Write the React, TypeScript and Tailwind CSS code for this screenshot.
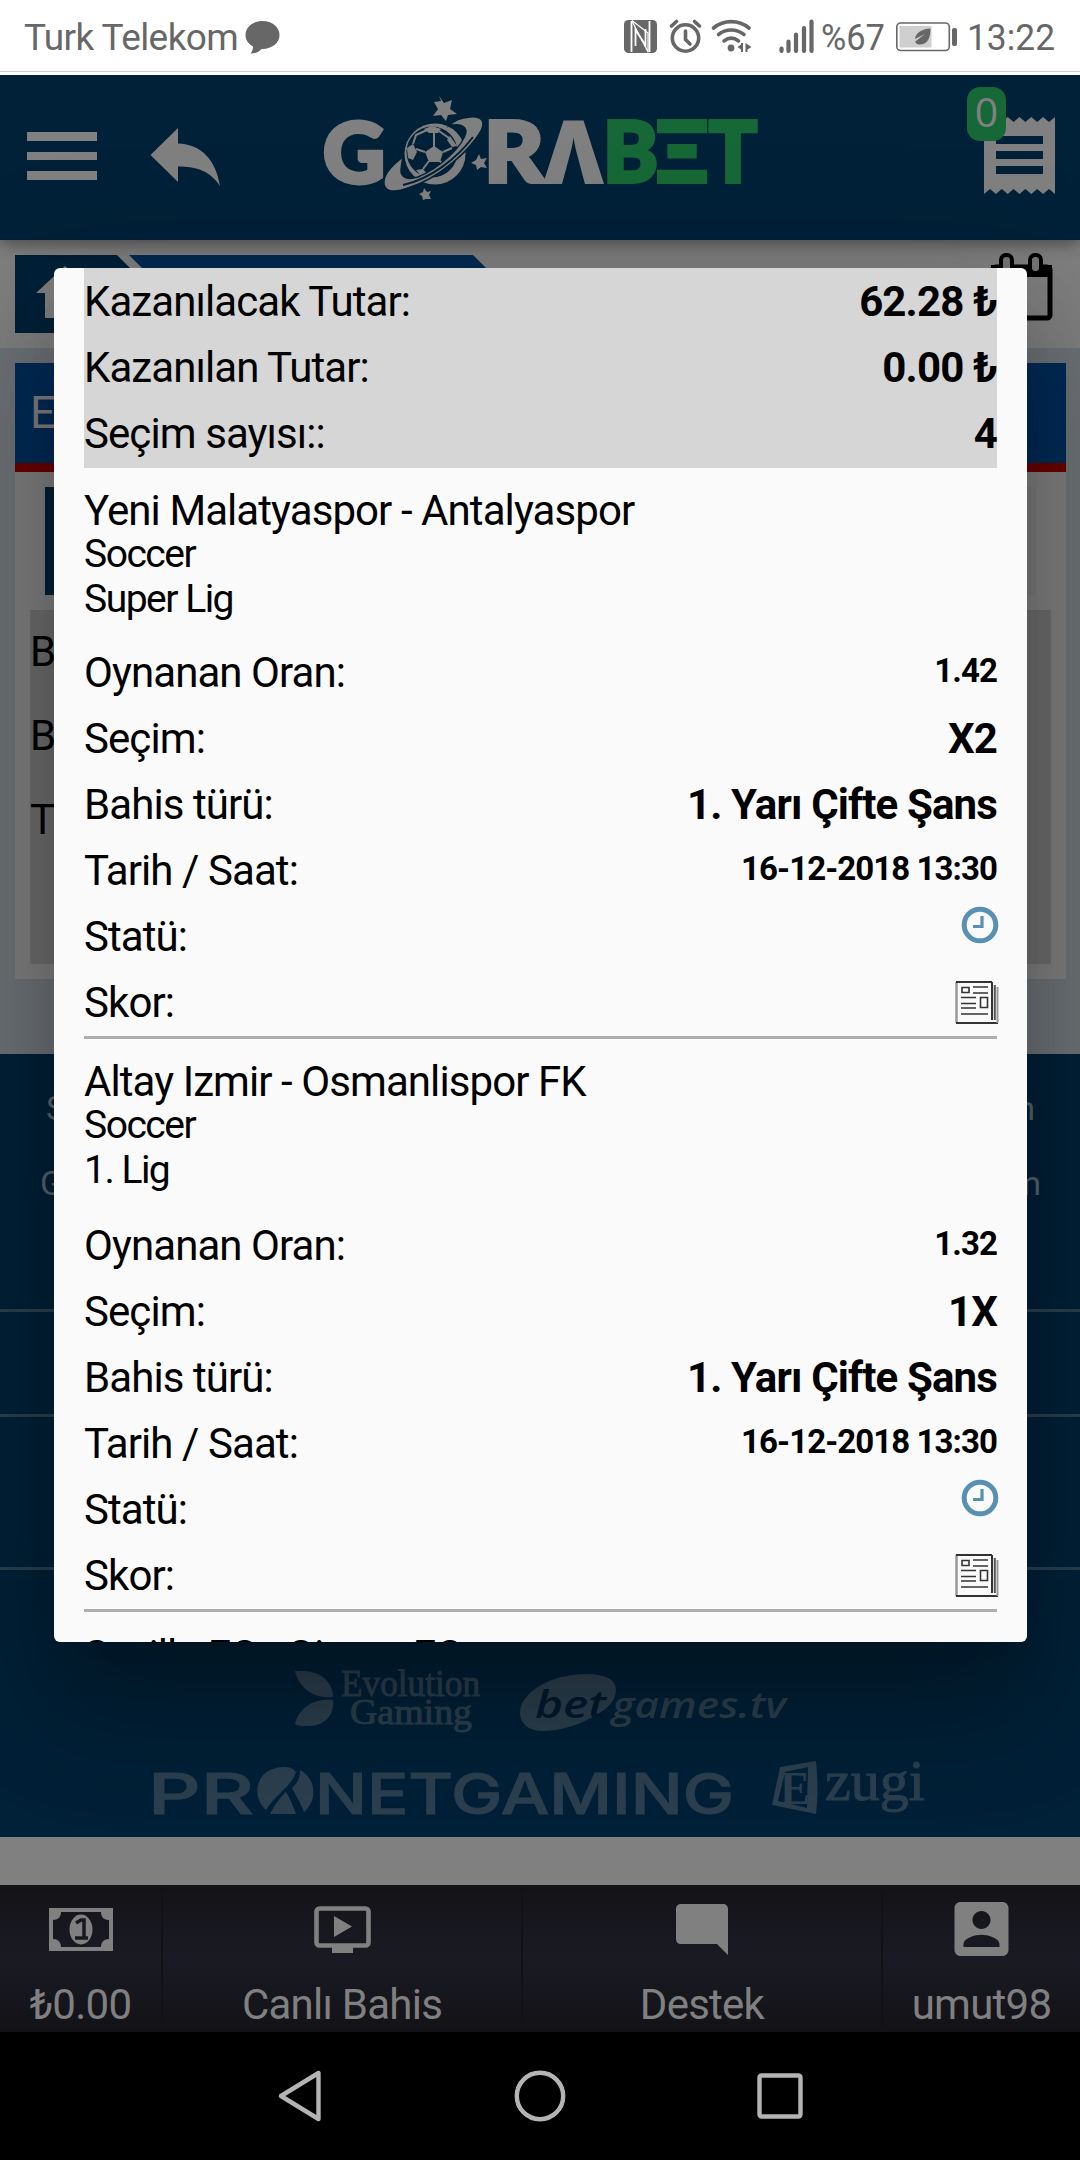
import type { ReactNode } from "react";

type Match = {
  teams: string;
  sport: string;
  league: string;
  odds: string;
  pick: string;
  market: string;
  date: string;
};

const matches: Match[] = [
  {
    teams: "Yeni Malatyaspor - Antalyaspor",
    sport: "Soccer",
    league: "Super Lig",
    odds: "1.42",
    pick: "X2",
    market: "1. Yarı Çifte Şans",
    date: "16-12-2018 13:30",
  },
  {
    teams: "Altay Izmir - Osmanlispor FK",
    sport: "Soccer",
    league: "1. Lig",
    odds: "1.32",
    pick: "1X",
    market: "1. Yarı Çifte Şans",
    date: "16-12-2018 13:30",
  },
];

export default function App() {
  return (
    <div className="flex h-[2160px] w-[1080px] flex-col overflow-hidden bg-black font-[Roboto,'Noto_Sans',sans-serif]">
      <StatusBar />
      <div className="relative flex h-[1957px] flex-col overflow-hidden">
        <Header />
        <Breadcrumb />
        <BetCard />
        <Footer />
        <div className="h-12 shrink-0 bg-[#808080]" />
        <BottomNav />
        <BetDialog />
      </div>
      <AndroidNav />
    </div>
  );
}

function StatusBar() {
  return (
    <div className="flex h-[75px] shrink-0 flex-col bg-white text-[#676767]">
      <div className="flex h-[71px] items-center justify-between pl-6 pr-6">
        <div className="flex items-center gap-[7px] pt-1">
          <span className="text-[37px] leading-none tracking-[-0.6px]">Turk Telekom</span>
          <svg width="35" height="33" viewBox="0 0 35 33" fill="currentColor">
            <path d="M17.5 0C8 0 .5 6.200.5 14c0 5 3 9 7.500 11.500C8 28 7.500 30 5.500 32.500c5 0 8.500-1.800 11-4.600h1C27 27.900 34.500 22 34.500 14S27 0 17.500 0z" />
          </svg>
        </div>
        <StatusIcons />
      </div>
      <div className="h-px bg-[#cccccc]" />
    </div>
  );
}

function StatusIcons() {
  return (
    <svg width="432" height="71" viewBox="624 0 432 71" fill="currentColor" stroke="none">
      {/* NFC */}
      <rect x="624" y="20" width="33" height="33" rx="4.500" />
      <path d="M631.500 21v31M649.500 21v31" stroke="#fff" strokeWidth="1.800" fill="none" />
      <path d="M632 20.500l16 12.500v19.500M648 52L632.500 22" stroke="#fff" strokeWidth="1.200" fill="none" />
      <path d="M635.500 46V30l10 15V29" stroke="#fff" strokeWidth="1.800" fill="none" />
      {/* alarm */}
      <g fill="none" stroke="currentColor" strokeWidth="3.600" strokeLinecap="round">
        <circle cx="685.500" cy="38" r="13.200" />
        <path d="M685.500 31v8.500l4.500 4.500M671.500 26l5-4.500M699.500 26l-5-4.500" />
      </g>
      {/* wifi */}
      <g fill="none" stroke="currentColor" strokeWidth="3.600" strokeLinecap="round">
        <path d="M713.500 28c10.500-8.500 25-8.500 35.500 0M718.500 34.500c7.500-6 17.500-6 25.500 0M724 41c4.500-3.500 10-3.500 14.500 0" />
      </g>
      <circle cx="731" cy="48" r="3.400" />
      <path d="M743 43v9h-2v-2.500l-3.500-2.500 3.500-2.500v-1.500zM745.500 43l6 4-4 2.500V52h-2z" />
      {/* signal */}
      <g stroke="currentColor" strokeWidth="4.200" strokeLinecap="round">
        <path d="M781.500 48.500v2.500M788.500 41.500v9.500M796 34.500v16.500M804 28v23M811.500 21.500v29.500" />
      </g>
      <text x="821" y="50" fontSize="37" textLength="64" lengthAdjust="spacingAndGlyphs">%67</text>
      {/* battery */}
      <rect x="896.800" y="23" width="52.500" height="27.500" rx="4" fill="none" stroke="currentColor" strokeWidth="1.600" />
      <rect x="899.500" y="26" width="32" height="21.500" fill="#cfcfcf" />
      <path d="M930.500 28.500c-9 .5-15 4.500-15.500 10.500l10-5-9.800 7.500c.5 2 1.800 3 4.300 3 7.500 0 11-5.500 11-16z" />
      <rect x="952" y="28" width="5" height="18" rx="2" />
      <text x="967" y="50" fontSize="37" textLength="88" lengthAdjust="spacingAndGlyphs">13:22</text>
    </svg>
  );
}

function Header() {
  return (
    <header className="relative z-10 flex h-[165px] shrink-0 items-start bg-[#002138] pl-[27px] pr-[25px] shadow-[0_4px_14px_rgba(0,0,0,0.4)]">
      <div className="flex gap-[53px]">
        <div className="mt-[57px] flex flex-col gap-[11px]">
          <div className="h-[9px] w-[70px] bg-[#808080]" />
          <div className="h-[8px] w-[70px] bg-[#808080]" />
          <div className="h-[9px] w-[70px] bg-[#808080]" />
        </div>
        <svg className="mt-[53px]" width="71" height="59" viewBox="0 0 71 59" fill="#808080">
          <path d="M28 0v15.500C51 16 66 32 70 58 60 43 47 38.500 28 38.500V54L.5 27z" />
        </svg>
      </div>
      <Logo />
      <div className="relative ml-auto mt-[42px]">
        <svg width="71" height="78" viewBox="0 0 71 78" fill="#808080">
          <path d="M0 0l6 5 5.800-5 6 5 5.900-5 5.900 5 5.900-5 5.900 5 5.900-5 5.900 5 5.900-5 5.900 5L71 0v77l-6-5-5.900 5-5.900-5-5.900 5-5.900-5-5.900 5-5.900-5-5.900 5-5.900-5-5.900 5L6 72l-6 5z" />
          <path d="M12 19h47v8H12zM12 34h47v8H12zM12 49h47v8H12z" fill="#002138" />
        </svg>
        <span className="absolute -left-[17px] -top-[30px] flex h-[54px] w-[39px] justify-center rounded-[13px] bg-[#176837] font-['Open_Sans'] text-[41px] leading-[49px] text-[#808080]">
          0
        </span>
      </div>
    </header>
  );
}

function Logo() {
  return (
    <svg className="ml-[100px] mt-5 overflow-visible" width="440" height="106" viewBox="321 95 440 106" fontFamily="Lato, sans-serif" fontWeight="900" fontSize="83">
      <g fill="#808080" stroke="#808080">
        <text x="323" y="183" textLength="62" lengthAdjust="spacingAndGlyphs" strokeWidth="4">G</text>
        <text x="484" y="182" textLength="60" lengthAdjust="spacingAndGlyphs" strokeWidth="4">R</text>
        <text x="543" y="184" textLength="61" lengthAdjust="spacingAndGlyphs" fontSize="88" fontFamily="Open Sans, sans-serif" fontWeight="800" stroke="none">Λ</text>
      </g>
      <g fill="#176837" stroke="#176837" strokeWidth="4">
        <text x="603" y="182" textLength="55" lengthAdjust="spacingAndGlyphs">B</text>
        <text x="656" y="182" textLength="52" lengthAdjust="spacingAndGlyphs">Ξ</text>
        <text x="709" y="182" textLength="48" lengthAdjust="spacingAndGlyphs">T</text>
      </g>
      {/* ball inside the planet ring */}
      <circle cx="435" cy="154" r="30.500" fill="#808080" />
      <circle cx="432" cy="152" r="25.500" fill="#002138" />
      <g fill="#808080">
        <path d="M434 146l9 6-3 10h-11l-4-10z" />
        <path d="M424 129l8-3 9 3-3 4h-9zM407 148l6-4 4 8-4 8-5-2zM416 170l7-1 5 6-5 3zM450 136l7 10-5 1-5-7z" />
      </g>
      <path d="M434 147v-14M425 152l-9-3M429 161l-6 8M440 161l5 6M443 152l9-4M413 144l3-9 11-5M439 131l10 7" stroke="#808080" strokeWidth="2" fill="none" />
      <path
        d="M403 157C391 166 383 176 384 184c1 8 11 9 24 4 32-10 62-38 73-57 5-10 0-15-11-14-10 1-15 3-21 9 11-3 17 0 17 6-2 13-26 36-48 45-10 3-16 1-17-5 0-5 1-10 2-15z"
        fill="#808080"
        stroke="#002138"
        strokeWidth="1.500"
      />
      <path d="M403 185c28-6 54-27 70-48" stroke="#002138" strokeWidth="2" fill="none" />
      <g fill="#808080">
        <path d="M439 97l5 7 8-3-2 9 7 5-9 1-2 6-5-6-8 1 5-7-4-7 7-1z" transform="translate(0 -1)" />
        <path d="M480 159l2 5 6-1-3 5 3 5-6-1-4 3-1-5-5-2 5-3z" transform="translate(-1 -5)" />
        <path d="M424 193l3 4 4-1-2 4 2 4-5 0-3 1-1-4-3-2 4-2z" transform="translate(0 -5)" />
      </g>
    </svg>
  );
}

function Breadcrumb() {
  return (
    <div className="flex h-[108px] shrink-0 items-start justify-between bg-[#808080] pl-[15px] pr-[27px]">
      <svg className="mt-[15px]" width="536" height="78" viewBox="0 0 536 78">
        <path d="M0 0h102l39 39-39 39H0z" fill="#002138" />
        <path d="M114 0h344l39 39-39 39H114l39-39z" fill="#002b52" />
        <path d="M21 38L50 11l29 27h-9v25H30V38z" fill="#808080" />
      </svg>
      <svg className="mt-[13px]" width="63" height="69" viewBox="0 0 63 69">
        <rect x="2.500" y="14" width="57.500" height="51" rx="3" fill="none" stroke="#000" strokeWidth="5" />
        <path d="M1 12h61v12H1z" />
        <rect x="11" y="2" width="11" height="18" rx="5" fill="#777" stroke="#000" strokeWidth="4" />
        <rect x="40" y="2" width="11" height="18" rx="5" fill="#777" stroke="#000" strokeWidth="4" />
      </svg>
    </div>
  );
}

function BetCard() {
  return (
    <div className="h-[706px] shrink-0 bg-[#6e7377] px-[15px] pt-[15px] pr-[14px]">
      <div className="flex h-[616px] flex-col bg-[#808080]">
        <div className="flex h-[109px] items-center border-b-[9px] border-[#6b0000] bg-[#002b57] px-[15px] text-[45px] text-[#808080]">E</div>
        <div className="mx-[30px] mt-[15px] h-[108px] bg-[#7c7c7c]">
          <div className="h-full w-[300px] bg-[#002138]" />
        </div>
        <div className="mx-[15px] mt-[15px] h-[354px] bg-[#6f6f6f] text-[42px] leading-[84px] text-black">
          <div>B</div>
          <div>B</div>
          <div>T</div>
        </div>
      </div>
    </div>
  );
}

function Footer() {
  return (
    <footer className="flex h-[783px] shrink-0 flex-col bg-[#002138] text-[#56666f]">
      <div className="flex h-[255px] flex-col pt-[17px] text-[34px] leading-[75px]">
        <div className="flex justify-between pl-[46px] pr-[45px]">
          <span>S</span>
          <span>m</span>
        </div>
        <div className="flex justify-between pl-[40px] pr-[39px]">
          <span>G</span>
          <span>m</span>
        </div>
      </div>
      <div className="h-[105px] border-t-[3px] border-[#2a4152]" />
      <div className="h-[153px] border-t-[3px] border-[#2a4152]" />
      <div className="flex flex-1 flex-col items-center border-t-[3px] border-[#2a4152] pt-[96px]">
        <ProviderLogos />
      </div>
    </footer>
  );
}

function ProviderLogos() {
  return (
    <svg className="overflow-visible" width="780" height="156" viewBox="150 1664 780 156" fill="#2c4050">
      {/* Evolution Gaming */}
      <path d="M295 1669c24-2 38 10 38 26-18 2-34-8-38-26zM333 1698c2 14-8 26-24 26-6 0-12 0-14-2 4-16 18-26 38-24z" />
      <g fontFamily="Liberation Serif, serif" stroke="#2c4050" strokeWidth="1">
        <text x="341" y="1694" fontSize="38" textLength="139" lengthAdjust="spacingAndGlyphs">Evolution</text>
        <text x="350" y="1722" fontSize="35" textLength="122" lengthAdjust="spacingAndGlyphs">Gaming</text>
      </g>
      {/* betgames.tv */}
      <path d="M520 1711c0-20 30-39 66-39 24 0 30 8 30 16 0 10-8 19-20 25-16 10-36 16-54 16-14 0-22-8-22-18z" />
      <g fontFamily="Open Sans, sans-serif" fontWeight="600" fontStyle="italic">
        <text x="535" y="1716" fontSize="37" fill="#001b2e" textLength="71" lengthAdjust="spacingAndGlyphs">bet</text>
        <text x="612" y="1716" fontSize="36" textLength="174" lengthAdjust="spacingAndGlyphs">games.tv</text>
      </g>
      {/* Pronet Gaming */}
      <g fontFamily="Inter, sans-serif" fontWeight="500" fontSize="56" stroke="#2c4050" strokeWidth="1">
        <text x="148" y="1812" textLength="106" lengthAdjust="spacingAndGlyphs">PR</text>
        <text x="315" y="1812" textLength="419" lengthAdjust="spacingAndGlyphs">NETGAMING</text>
      </g>
      <path d="M266 1808c-16-14-10-43 18-43 6 0 10 2 12 5-4 14-22 24-30 38zM270 1812c6-12 12-18 16-22 4 6 8 16 10 22zM300 1768c16 8 18 30 4 42-4-10-8-16-12-24 6-6 8-10 8-18z" />
      {/* Ezugi */}
      <path d="M780 1765l36-6c2 18 2 36 0 53l-44-9zM785 1770l-7 29 29 7 1-41z" fillRule="evenodd" />
      <g fontFamily="Liberation Serif, serif" fontWeight="700">
        <text x="780" y="1802" fontSize="46" textLength="30" lengthAdjust="spacingAndGlyphs">E</text>
        <text x="825" y="1798" fontSize="56" fontWeight="400" stroke="#2c4050" textLength="100" lengthAdjust="spacingAndGlyphs">zugi</text>
      </g>
    </svg>
  );
}

function BetDialog() {
  return (
    <div className="absolute left-[54px] top-[193px] z-20 h-[1374px] w-[973px] overflow-hidden rounded-[6px] bg-[#fafafa] px-[30px] text-[42px] leading-[66px] tracking-[-0.92px] text-black shadow-[0_27px_138px_24px_rgba(0,0,0,0.14),0_33px_45px_-21px_rgba(0,0,0,0.12),0_72px_114px_9px_rgba(0,0,0,0.2)]">
      <div className="h-[200px] bg-[#d6d6d6] pt-px">
        <Row label="Kazanılacak Tutar:">62.28 ₺</Row>
        <Row label="Kazanılan Tutar:">0.00 ₺</Row>
        <Row label="Seçim sayısı::">4</Row>
      </div>
      <div>
        {matches.map((m) => (
          <MatchBlock key={m.teams} match={m} />
        ))}
      </div>
      <div className="pt-[19px] leading-[50px]">Sevilla FC - Girona FC</div>
    </div>
  );
}

function Row({ label, small, children }: { label: string; small?: boolean; children: ReactNode }) {
  return (
    <div className="flex h-[66px] justify-between">
      <span>{label}</span>
      {small ? (
        <span className="text-[33px] font-bold leading-[62px]">{children}</span>
      ) : (
        <span className="font-bold tracking-[-0.86px]">{children}</span>
      )}
    </div>
  );
}

function MatchBlock({ match }: { match: Match }) {
  return (
    <div className="group border-b-[3px] border-[#aeaeae]">
      <div className="h-[172px] pt-[18px] group-last:h-[174px]">
        <div className="h-[46px] leading-[50px]">{match.teams}</div>
        <div className="text-[39px] leading-[45px] tracking-[-1.5px]">{match.sport}</div>
        <div className="text-[39px] leading-[45px] tracking-[-1.5px]">{match.league}</div>
      </div>
      <Row label="Oynanan Oran:" small>{match.odds}</Row>
      <Row label="Seçim:">{match.pick}</Row>
      <Row label="Bahis türü:">{match.market}</Row>
      <Row label="Tarih / Saat:" small>{match.date}</Row>
      <Row label="Statü:"><ClockIcon /></Row>
      <Row label="Skor:"><NewsIcon /></Row>
    </div>
  );
}

function ClockIcon() {
  return (
    <svg className="-mr-[2px] mt-[2px]" width="38" height="38" viewBox="0 0 38 38" fill="none" stroke="#5890b3">
      <circle cx="19" cy="19" r="15.800" strokeWidth="5" />
      <path d="M21 10v10.500h-9" strokeWidth="3.200" />
    </svg>
  );
}

function NewsIcon() {
  return (
    <svg className="-mr-[2px] mt-[11px]" width="44" height="43" viewBox="0 0 44 43" fill="none" stroke="#333">
      <path d="M1.500 1v41" stroke="#999" strokeWidth="2.500" />
      <path d="M1 1h36M1 42h42" strokeWidth="2" />
      <path d="M37 1v38" strokeWidth="2" />
      <path d="M39.800 4v35" stroke="#555" strokeWidth="2" />
      <path d="M42.500 6v36" stroke="#999" strokeWidth="2" />
      <path d="M7 6.500h7v5H7zM25.500 16.500h7v10h-7zM18 6h15M18 12h15M6 16.500h15M6 22.500h15M6 27h15M6 33h27" strokeWidth="1.600" />
    </svg>
  );
}

function NavItem({ label, children }: { label: string; children: ReactNode }) {
  return (
    <div className="flex flex-col items-center">
      <div className="flex h-[90px] items-center pb-[2px]">{children}</div>
      <span className="text-[42px] leading-[60px] tracking-[-0.75px]">{label}</span>
    </div>
  );
}

function BottomNav() {
  return (
    <nav className="grid h-[147px] shrink-0 grid-cols-[163px_360px_360px_197px] divide-x-2 divide-[#121216] bg-linear-to-b from-[#131317] via-[#1a1a24] to-[#121216] text-[#808080]">
      <NavItem label="₺0.00">
        <svg width="66" height="43" viewBox="0 0 66 43" fill="currentColor">
          <path fillRule="evenodd" d="M1 0h64v43H1zM13 4c0 5-3 8-8 8v19c5 0 8 3 8 8h40c0-5 3-8 8-8V12c-5 0-8-3-8-8z" />
          <ellipse cx="33" cy="21.500" rx="11.500" ry="15" />
          <path d="M28 15l5-3h3v17M27 30h13" fill="none" stroke="#18181f" strokeWidth="3.500" />
        </svg>
      </NavItem>
      <NavItem label="Canlı Bahis">
        <svg width="57" height="47" viewBox="0 0 57 47">
          <rect x="2.500" y="2.500" width="52" height="37" rx="3" fill="none" stroke="currentColor" strokeWidth="4.600" />
          <path d="M20 10l18 10.500L20 31zM18 40h21v7H18z" fill="currentColor" />
        </svg>
      </NavItem>
      <NavItem label="Destek">
        <svg width="52" height="51" viewBox="0 0 52 51" fill="currentColor">
          <path d="M5 0h42c3 0 5 2 5 5v46L41 40H5c-3 0-5-2-5-5V5c0-3 2-5 5-5z" />
        </svg>
      </NavItem>
      <NavItem label="umut98">
        <svg width="55" height="54" viewBox="3 3 18 18" fill="currentColor">
          <path d="M3 5v14c0 1.100.89 2 2 2h14c1.100 0 2-.9 2-2V5c0-1.100-.9-2-2-2H5c-1.110 0-2 .9-2 2zm12 4c0 1.660-1.340 3-3 3s-3-1.340-3-3 1.340-3 3-3 3 1.340 3 3zm-9 8c0-2 4-3.100 6-3.100s6 1.100 6 3.100v1H6v-1z" />
        </svg>
      </NavItem>
    </nav>
  );
}

function AndroidNav() {
  return (
    <div className="flex h-32 items-center justify-center bg-black">
      <svg width="528" height="56" viewBox="276 2068 528 56" fill="none" stroke="#b4b4b4" strokeWidth="4.400" strokeLinejoin="round">
        <path d="M281 2096l37.500-23v46z" />
        <circle cx="540" cy="2096" r="23.200" />
        <rect x="759.500" y="2075.500" width="41" height="41" rx="2" />
      </svg>
    </div>
  );
}
